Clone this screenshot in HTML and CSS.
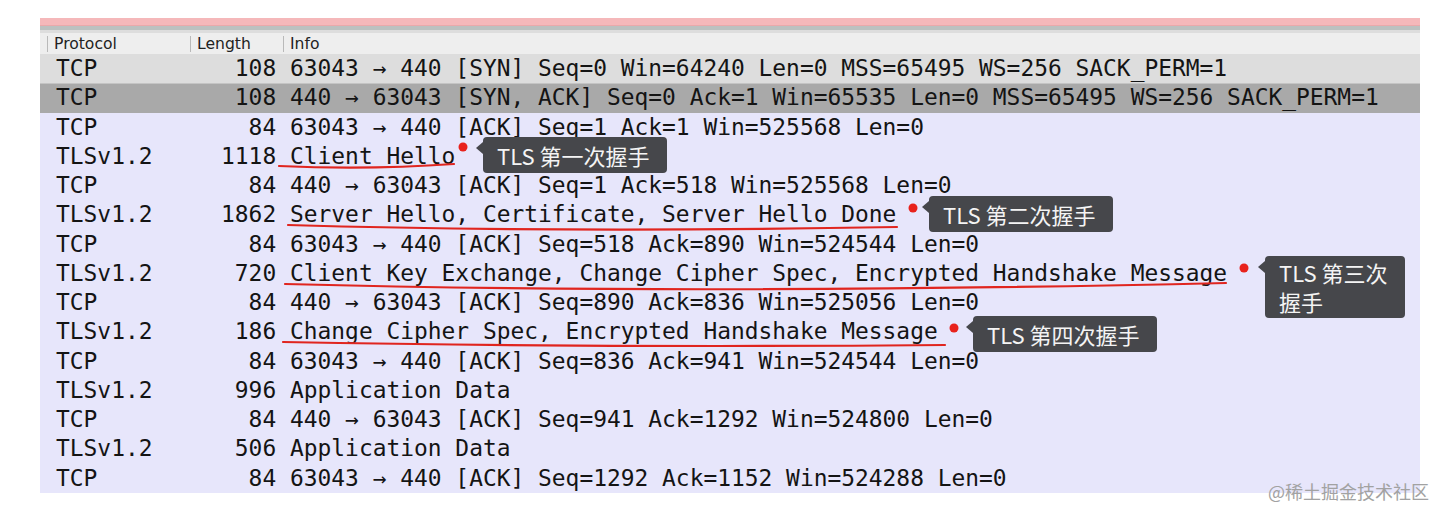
FILE: index.html
```html
<!DOCTYPE html>
<html lang="zh-CN">
<head>
<meta charset="utf-8">
<title>Wireshark TLS handshake</title>
<link rel="stylesheet" href="styles.css">
</head>
<body>
<div class="capture">
  <div class="topbar"></div>
  <div class="header">
    <div class="hcell">Protocol</div>
    <div class="hcell">Length</div>
    <div class="hcell">Info</div>
  </div>
  <div class="rows">
    <div class="row first"><span class="proto">TCP</span><span class="len">108</span><span class="info">63043 → 440 [SYN] Seq=0 Win=64240 Len=0 MSS=65495 WS=256 SACK_PERM=1</span></div>
    <div class="row selected"><span class="proto">TCP</span><span class="len">108</span><span class="info">440 → 63043 [SYN, ACK] Seq=0 Ack=1 Win=65535 Len=0 MSS=65495 WS=256 SACK_PERM=1</span></div>
    <div class="row"><span class="proto">TCP</span><span class="len">84</span><span class="info">63043 → 440 [ACK] Seq=1 Ack=1 Win=525568 Len=0</span></div>
    <div class="row"><span class="proto">TLSv1.2</span><span class="len">1118</span><span class="info">Client Hello</span></div>
    <div class="row"><span class="proto">TCP</span><span class="len">84</span><span class="info">440 → 63043 [ACK] Seq=1 Ack=518 Win=525568 Len=0</span></div>
    <div class="row"><span class="proto">TLSv1.2</span><span class="len">1862</span><span class="info">Server Hello, Certificate, Server Hello Done</span></div>
    <div class="row"><span class="proto">TCP</span><span class="len">84</span><span class="info">63043 → 440 [ACK] Seq=518 Ack=890 Win=524544 Len=0</span></div>
    <div class="row"><span class="proto">TLSv1.2</span><span class="len">720</span><span class="info">Client Key Exchange, Change Cipher Spec, Encrypted Handshake Message</span></div>
    <div class="row"><span class="proto">TCP</span><span class="len">84</span><span class="info">440 → 63043 [ACK] Seq=890 Ack=836 Win=525056 Len=0</span></div>
    <div class="row"><span class="proto">TLSv1.2</span><span class="len">186</span><span class="info">Change Cipher Spec, Encrypted Handshake Message</span></div>
    <div class="row"><span class="proto">TCP</span><span class="len">84</span><span class="info">63043 → 440 [ACK] Seq=836 Ack=941 Win=524544 Len=0</span></div>
    <div class="row"><span class="proto">TLSv1.2</span><span class="len">996</span><span class="info">Application Data</span></div>
    <div class="row"><span class="proto">TCP</span><span class="len">84</span><span class="info">440 → 63043 [ACK] Seq=941 Ack=1292 Win=524800 Len=0</span></div>
    <div class="row"><span class="proto">TLSv1.2</span><span class="len">506</span><span class="info">Application Data</span></div>
    <div class="row"><span class="proto">TCP</span><span class="len">84</span><span class="info">63043 → 440 [ACK] Seq=1292 Ack=1152 Win=524288 Len=0</span></div>
  </div>
</div>

<svg class="marks" width="1446" height="516" viewBox="0 0 1446 516">
  <path d="M279 166 Q368 170 454 164"/>
  <path d="M288 225 Q560 233 897 227"/>
  <path d="M285 284 Q700 295 1226 283"/>
  <path d="M283 342 Q600 348 945 345"/>
  <circle cx="463" cy="147" r="4.5"/>
  <circle cx="913" cy="208" r="4.5"/>
  <circle cx="1244" cy="268" r="4.5"/>
  <circle cx="954" cy="328" r="4.5"/>
</svg>

<div class="tip tip1">TLS 第一次握手</div>
<div class="tip tip2">TLS 第二次握手</div>
<div class="tip tip3">TLS 第三次<br>握手</div>
<div class="tip tip4">TLS 第四次握手</div>

<div class="watermark">@稀土掘金技术社区</div>
</body>
</html>
```

FILE: styles.css
```css
html, body {
  margin: 0;
  padding: 0;
  background: #ffffff;
}

body {
  position: relative;
  width: 1446px;
  height: 516px;
  overflow: hidden;
}

.capture {
  margin: 18px 0 0 40px;
  width: 1380px;
}

.topbar {
  height: 8px;
  background: #f5b8ba;
  border-bottom: 4px solid #bcc1c0;
  box-shadow: inset 0 -1px 0 #e9a9ab;
}

.header {
  height: 21px;
  border-top: 3px solid #dddddd;
  background: #eeeeee;
  display: grid;
  grid-template-columns: 143px 93px 1fr;
  align-items: center;
  padding-left: 7px;
  font-family: "DejaVu Sans", "Liberation Sans", sans-serif;
  font-size: 15.6px;
  color: #222222;
}

.hcell {
  border-left: 1px solid #b9b9b9;
  padding-left: 6px;
  line-height: 16px;
  height: 16px;
}

.rows {
  background: #e7e6fb;
}

.row {
  height: 29.27px;
  line-height: 29.27px;
  display: grid;
  grid-template-columns: 110.4px 96px 1fr;
  column-gap: 13.8px;
  padding-left: 16px;
  font-family: "DejaVu Sans Mono", "Liberation Mono", monospace;
  font-size: 22.9px;
  color: #141414;
  white-space: nowrap;
}

.row.first {
  background: #dddddd;
}

.row.selected {
  background: #a9a9a9;
  box-shadow: inset 0 1px 0 #c4c4c4;
}

.len {
  text-align: right;
}

.marks {
  position: absolute;
  left: 0;
  top: 0;
  pointer-events: none;
}

.marks path {
  fill: none;
  stroke: #e0251f;
  stroke-width: 2.2;
  stroke-linecap: round;
}

.marks circle {
  fill: #e8221c;
}

.tip {
  position: absolute;
  background: #46474b;
  color: #f4f4f4;
  font-family: "Noto Sans CJK SC", "Noto Sans", sans-serif;
  font-size: 22px;
  line-height: 30px;
  padding: 3px 17px 3px 14px;
  border-radius: 4px;
  white-space: nowrap;
}

.tip::before {
  content: "";
  position: absolute;
  left: -7px;
  top: 5px;
  border-top: 6px solid transparent;
  border-bottom: 6px solid transparent;
  border-right: 7px solid #46474b;
}

.tip3 {
  line-height: 29px;
  padding-top: 2px;
  padding-bottom: 2px;
}

.tip1 { left: 483px; top: 137px; }
.tip2 { left: 929px; top: 196px; }
.tip3 { left: 1265px; top: 256px; }
.tip4 { left: 973px; top: 316px; }

.watermark {
  position: absolute;
  left: 1268px;
  top: 478px;
  font-family: "Noto Sans CJK SC", sans-serif;
  font-size: 18px;
  line-height: 26px;
  color: #a2a2a2;
}
```
